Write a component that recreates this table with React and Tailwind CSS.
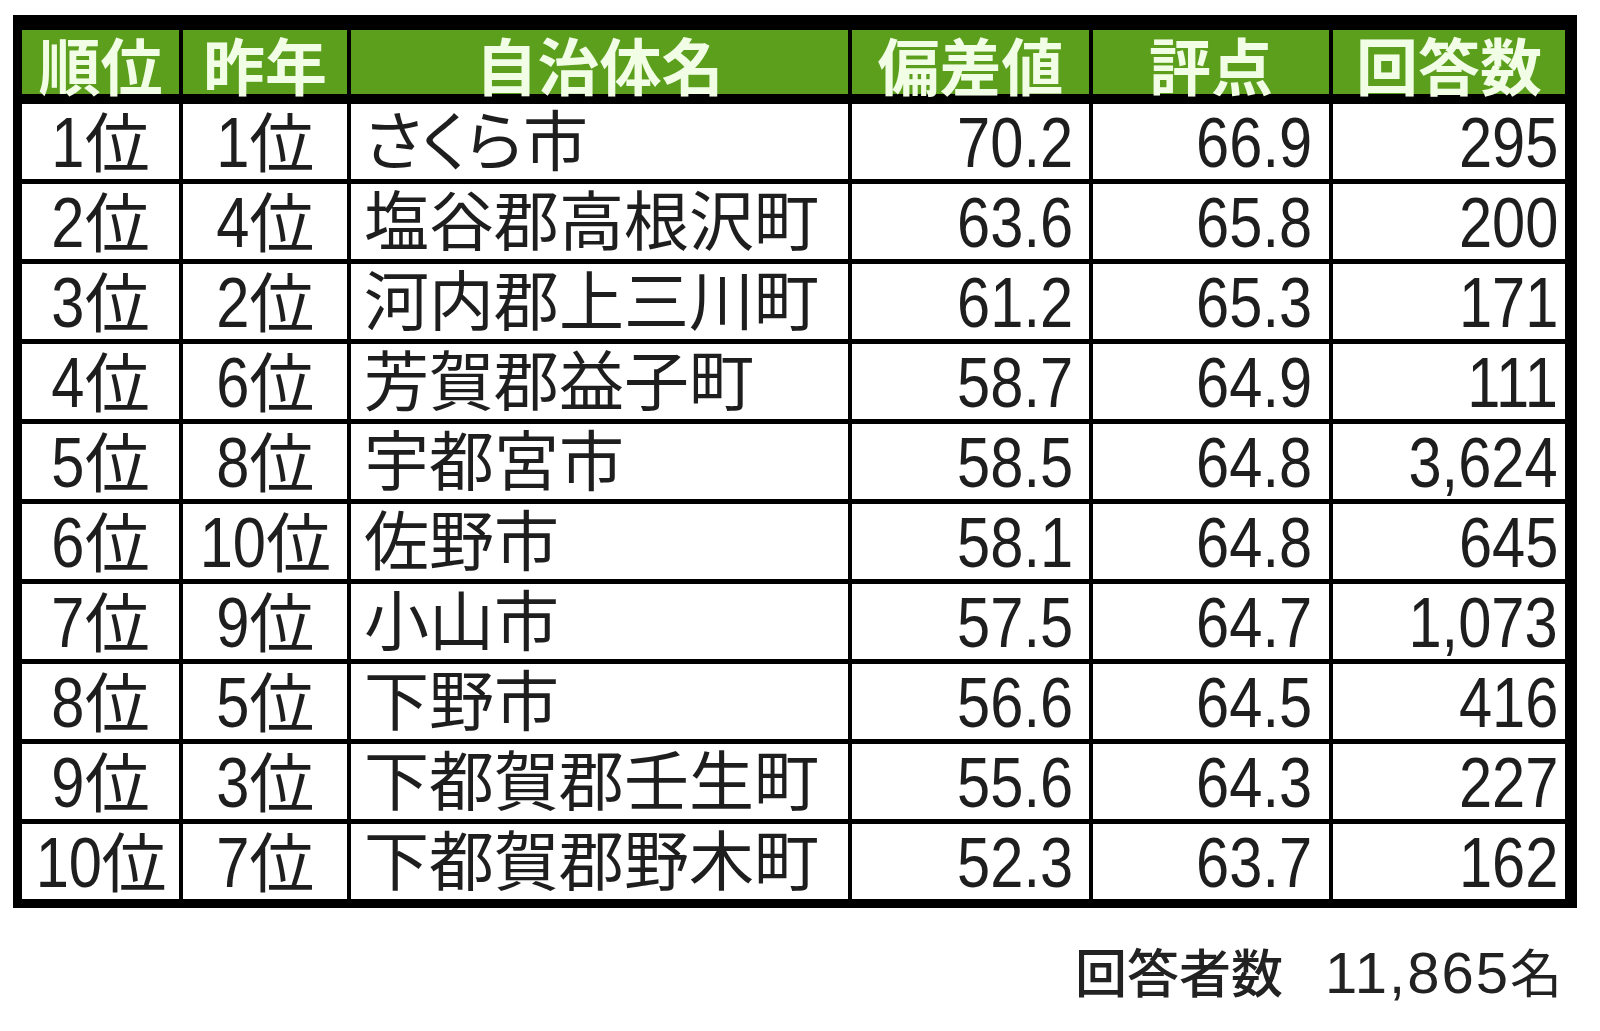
import React from 'react';

// 栃木県 住み続けたい街ランキング表
const columns = [
  { label: '順位', w: 'w-[157px]' },
  { label: '昨年', w: 'w-[164px]' },
  { label: '自治体名', w: 'w-[497px]' },
  { label: '偏差値', w: 'w-[237px]' },
  { label: '評点', w: 'w-[236px]' },
  { label: '回答数', w: 'w-[232px]' },
];

const rows = [
  ['1位', '1位', 'さくら市', '70.2', '66.9', '295'],
  ['2位', '4位', '塩谷郡高根沢町', '63.6', '65.8', '200'],
  ['3位', '2位', '河内郡上三川町', '61.2', '65.3', '171'],
  ['4位', '6位', '芳賀郡益子町', '58.7', '64.9', '111'],
  ['5位', '8位', '宇都宮市', '58.5', '64.8', '3,624'],
  ['6位', '10位', '佐野市', '58.1', '64.8', '645'],
  ['7位', '9位', '小山市', '57.5', '64.7', '1,073'],
  ['8位', '5位', '下野市', '56.6', '64.5', '416'],
  ['9位', '3位', '下都賀郡壬生町', '55.6', '64.3', '227'],
  ['10位', '7位', '下都賀郡野木町', '52.3', '63.7', '162'],
];

// narrow, tall digits like the original spreadsheet font
const Num = ({ children }) => (
  <span className="inline-block text-[71px] leading-none scale-x-[0.84] origin-right">{children}</span>
);

// "10位" -> digits squeezed towards 位, margin pulls the layout width in
const Rank = ({ value }) => {
  const digits = value.replace('位', '');
  return (
    <span className="inline-flex items-baseline">
      <span
        className={`inline-block text-[71px] leading-none scale-x-[0.84] origin-right ${digits.length > 1 ? '-ml-[12px]' : '-ml-[6px]'}`}
      >
        {digits}
      </span>
      <span className="text-[65px] leading-none">位</span>
    </span>
  );
};

const Row = ({ cells }) => (
  <div className="flex gap-x-[4px]">
    <div className="w-[157px] h-[75px] bg-white flex items-center justify-center pt-[2px]"><Rank value={cells[0]} /></div>
    <div className="w-[164px] h-[75px] bg-white flex items-center justify-center pt-[2px]"><Rank value={cells[1]} /></div>
    <div className="w-[497px] h-[75px] bg-white flex items-center pl-[13px] pt-[2px] text-[65px] leading-none [font-feature-settings:'palt']">{cells[2]}</div>
    <div className="w-[237px] h-[75px] bg-white flex items-center justify-end pr-[16px] pt-[2px]"><Num>{cells[3]}</Num></div>
    <div className="w-[236px] h-[75px] bg-white flex items-center justify-end pr-[17px] pt-[2px]"><Num>{cells[4]}</Num></div>
    <div className="w-[232px] h-[75px] bg-white flex items-center justify-end pr-[7px] pt-[2px]"><Num>{cells[5]}</Num></div>
  </div>
);

export default function App() {
  return (
    <div className="w-[1600px] h-[1031px] bg-white overflow-hidden pt-[15px] font-['Liberation_Sans','Noto_Sans_CJK_JP',sans-serif]">
      <div className="ml-[13px] w-[1564px] bg-black pt-[15px] pl-[9px] pr-[10px] pb-[9px]">
        {/* header */}
        <div className="flex gap-x-[4px]">
          {columns.map(col => (
            <div
              key={col.label}
              className={`${col.w} h-[64px] bg-[#5b9f1d] flex items-end justify-center text-[62px] leading-[60px] font-bold text-[#f2fde6] font-['Noto_Sans_CJK_JP',sans-serif]`}
            >
              {col.label}
            </div>
          ))}
        </div>

        {/* body */}
        <div className="mt-[10px] flex flex-col gap-y-[5px] text-[#1e1e1e]">
          {rows.map(r => (
            <Row key={r[0]} cells={r} />
          ))}
        </div>
      </div>

      <div className="mt-[36px] pr-[38px] flex justify-end items-baseline text-[#222] leading-none">
        <span className="text-[52px] font-['Noto_Sans_CJK_JP',sans-serif] font-medium">回答者数</span>
        <span className="ml-[42px] text-[58px] tracking-[2px] font-['Liberation_Sans','Noto_Sans_CJK_JP',sans-serif]">11,865</span>
        <span className="text-[52px] font-['Noto_Sans_CJK_JP',sans-serif]">名</span>
      </div>
    </div>
  );
}
